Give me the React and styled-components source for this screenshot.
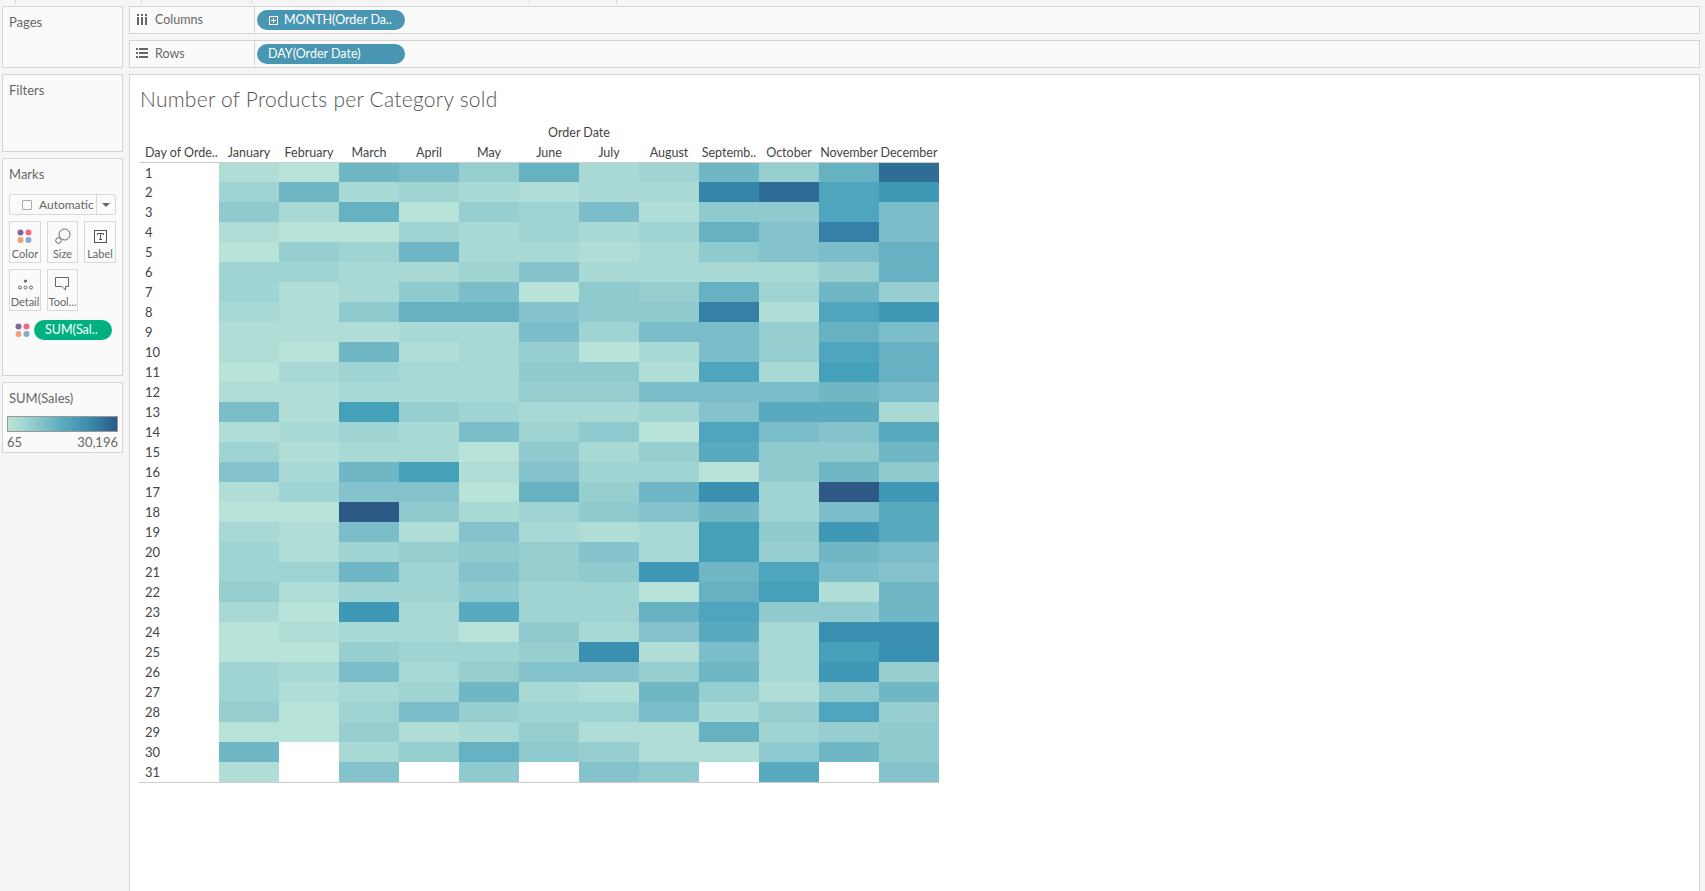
import React from 'react'
import styled, { createGlobalStyle } from 'styled-components'

const GlobalStyle = createGlobalStyle`
    html, body {
        margin: 0;
        padding: 0;
        background: #f5f5f5;
    }
    body {
        font-family: "Lato", "Open Sans", sans-serif;
        color: #555;
    }
`

const Page = styled.div`
    width: 1705px;
    height: 891px;
    overflow: hidden;
    display: flex;
    flex-direction: column;
    box-sizing: border-box;
`

const TopStrip = styled.div`
    height: 6px;
    flex: none;
    display: flex;
`

const TopTab = styled.div`
    width: ${({ $w }) => $w}px;
    box-sizing: border-box;
    border-right: 1px solid #d8d8d8;
    height: 4px;
`

const Workspace = styled.div`
    flex: 1;
    min-height: 0;
    display: grid;
    grid-template-columns: 121px 1571px;
    column-gap: 6px;
    padding-left: 2px;
`

const SideColumn = styled.div`
    display: flex;
    flex-direction: column;
    gap: 6px;
`

const Card = styled.div`
    box-sizing: border-box;
    height: ${({ $h }) => $h}px;
    background: #fafafa;
    border: 1px solid #d4d4d4;
    padding: 8px 6px 0 6px;
    font-size: 13px;
    line-height: 14px;
    color: #666;
`

const MarkType = styled.div`
    margin-top: 13px;
    height: 21px;
    width: 107px;
    box-sizing: border-box;
    border: 1px solid #d8d8d8;
    border-radius: 2px;
    background: #fafafa;
    display: grid;
    grid-template-columns: 1fr 18px;
    font-size: 12px;
`

const MarkTypeLabel = styled.div`
    display: flex;
    align-items: center;
    gap: 7px;
    padding-left: 12px;
    border-right: 1px solid #d8d8d8;
    color: #666;
`

const CheckBox = styled.span`
    width: 8px;
    height: 8px;
    border: 1px solid #aaa;
    border-radius: 1px;
`

const Caret = styled.div`
    display: flex;
    align-items: center;
    justify-content: center;
    &::after {
        content: '';
        border-left: 4px solid transparent;
        border-right: 4px solid transparent;
        border-top: 4px solid #666;
    }
`

const MarkGrid = styled.div`
    margin-top: 6px;
    display: grid;
    grid-template-columns: 32px 31px 32px;
    grid-auto-rows: 42px;
    column-gap: 6px;
    row-gap: 6px;
`

const MarkButton = styled.div`
    box-sizing: border-box;
    background: #fafafa;
    border: 1px solid #d8d8d8;
    display: flex;
    flex-direction: column;
    align-items: center;
    padding-top: 3px;
    font-size: 11px;
    line-height: 13px;
    color: #666;
    white-space: nowrap;
    overflow: hidden;
`

const IconSlot = styled.div`
    height: 22px;
    flex: none;
    display: flex;
    align-items: center;
    justify-content: center;
`

const EncodingRow = styled.div`
    margin-top: 9px;
    display: flex;
    align-items: center;
    gap: 3px;
    padding-left: 6px;
`

const Pill = styled.div`
    box-sizing: border-box;
    height: 20px;
    width: ${({ $w }) => $w}px;
    flex: none;
    border-radius: 10px;
    background: ${({ $bg }) => $bg};
    color: #fff;
    font-size: 12.5px;
    line-height: 20px;
    display: flex;
    align-items: center;
    gap: 6px;
    padding-left: ${({ $pad }) => $pad}px;
    white-space: nowrap;
`

const PlusBox = styled.span`
    width: 7px;
    height: 7px;
    border: 1px solid #fff;
    position: relative;
    &::before, &::after {
        content: '';
        position: absolute;
        background: #fff;
    }
    &::before { left: 1px; right: 1px; top: 3px; height: 1px; }
    &::after { top: 1px; bottom: 1px; left: 3px; width: 1px; }
`

const LegendTitle = styled.div`
    margin-bottom: 11px;
`

const LegendBar = styled.div`
    margin: 0 -2px;
    height: 16px;
    box-sizing: border-box;
    border: 1px solid #999;
    background: linear-gradient(to right, #bce4d8, #8fcace 25%, #5aaabf 50%, #3f90b0 72%, #2c5985);
`

const LegendScale = styled.div`
    display: flex;
    justify-content: space-between;
    margin: 3px -2px 0;
`

const MainColumn = styled.div`
    display: flex;
    flex-direction: column;
    gap: 6px;
    min-height: 0;
`

const Shelf = styled.div`
    box-sizing: border-box;
    height: ${({ $h }) => $h}px;
    flex: none;
    background: #fafafa;
    border: 1px solid #d4d4d4;
    display: grid;
    grid-template-columns: 125px 1fr;
`

const ShelfLabel = styled.div`
    border-right: 1px solid #d4d4d4;
    display: flex;
    align-items: center;
    gap: 7px;
    padding: 0 0 2px 6px;
    font-size: 12.5px;
    color: #666;
`

const ShelfIcon = styled.span`
    width: 12px;
    display: flex;
    justify-content: center;
`

const ShelfBody = styled.div`
    display: flex;
    align-items: center;
    padding-left: 2px;
`

const View = styled.div`
    flex: 1;
    min-height: 0;
    background: #fff;
    border: 1px solid #d4d4d4;
    border-bottom: none;
    padding: 12px 0 0 9px;
`

const Title = styled.h1`
    margin: 0 0 0 1px;
    font-size: 21px;
    line-height: 24px;
    font-weight: 300;
    color: #555;
    letter-spacing: 0.25px;
`

const Table = styled.div`
    margin-top: 12px;
    width: 800px;
    display: grid;
    grid-template-columns: 80px repeat(12, 60px);
    grid-template-rows: 20px 20px 19px;
    grid-auto-rows: 20px;
    font-size: 12.5px;
    color: #444;
    border-bottom: 1px solid #ccc;
`

const SuperHeader = styled.div`
    grid-column: 2 / -1;
    line-height: 20px;
    text-align: center;
    white-space: nowrap;
`

const RowHeader = styled.div`
    box-sizing: border-box;
    padding-left: 6px;
    line-height: 19px;
    white-space: nowrap;
    border-bottom: ${({ $ruled }) => ($ruled ? '1px solid #ccc' : 'none')};
`

const ColumnHeader = styled.div`
    box-sizing: border-box;
    line-height: 19px;
    white-space: nowrap;
    display: flex;
    justify-content: center;
    border-bottom: 1px solid #ccc;
`

const DayLabel = styled.div`
    padding-left: 6px;
    line-height: 20px;
    font-size: 13px;
    color: #444;
`

const Cell = styled.div`
    background: ${({ $bg }) => $bg};
`

const shades = [
    '#b8e3d8', '#b0ddd6', '#a8d9d4', '#9fd4d2', '#97cfd0', '#8fcace', '#85c3cc',
    '#7bbdc9', '#70b7c5', '#66b1c2', '#5aaabf', '#4ea5bd', '#45a0ba', '#3f98b6',
    '#3a90b1', '#3585a9', '#3480a6', '#3075a0', '#2f6d96', '#2c628e', '#2c5985',
]

const months = [
    'January', 'February', 'March', 'April', 'May', 'June', 'July', 'August',
    'Septemb..', 'October', 'November', 'December',
]

// one row per day, January to December, values index into shades
const _ = null
const sales = [
    [1, 0, 8, 7, 4, 9, 2, 3, 8, 4, 9, 18],
    [3, 8, 2, 3, 2, 1, 2, 2, 15, 18, 11, 13],
    [5, 2, 9, 0, 4, 3, 7, 1, 5, 5, 11, 7],
    [1, 0, 0, 3, 2, 3, 2, 3, 9, 6, 16, 7],
    [0, 4, 3, 8, 2, 2, 1, 2, 5, 6, 7, 9],
    [3, 3, 2, 2, 3, 6, 2, 2, 2, 2, 4, 9],
    [3, 1, 2, 5, 7, 0, 5, 4, 9, 3, 8, 4],
    [2, 1, 5, 9, 9, 6, 5, 5, 16, 1, 11, 13],
    [1, 1, 1, 2, 2, 7, 3, 7, 7, 4, 9, 7],
    [1, 0, 8, 1, 2, 4, 0, 2, 7, 4, 11, 9],
    [0, 2, 3, 2, 2, 5, 5, 1, 11, 2, 12, 9],
    [1, 1, 2, 2, 2, 4, 4, 7, 7, 7, 8, 7],
    [7, 1, 12, 4, 3, 2, 2, 3, 6, 10, 10, 2],
    [1, 2, 3, 2, 7, 3, 5, 0, 11, 7, 6, 10],
    [3, 1, 2, 2, 0, 5, 2, 4, 10, 5, 5, 8],
    [6, 2, 8, 12, 1, 6, 3, 3, 0, 5, 8, 5],
    [1, 3, 6, 6, 0, 9, 4, 8, 14, 3, 20, 13],
    [0, 0, 20, 5, 2, 3, 5, 6, 8, 3, 7, 10],
    [2, 1, 7, 1, 6, 2, 1, 2, 12, 5, 13, 10],
    [3, 1, 3, 4, 5, 4, 6, 2, 12, 4, 8, 7],
    [3, 3, 8, 3, 6, 4, 5, 13, 8, 11, 7, 6],
    [4, 1, 3, 3, 5, 3, 3, 0, 9, 12, 1, 8],
    [2, 0, 13, 2, 10, 3, 3, 9, 11, 5, 5, 8],
    [0, 1, 2, 2, 0, 5, 2, 6, 10, 2, 14, 14],
    [0, 0, 4, 3, 3, 4, 14, 1, 7, 2, 12, 14],
    [3, 2, 7, 2, 4, 6, 6, 4, 8, 2, 13, 4],
    [3, 1, 2, 3, 8, 2, 1, 8, 4, 1, 5, 8],
    [4, 0, 3, 7, 4, 3, 3, 7, 2, 4, 11, 4],
    [0, 0, 4, 1, 2, 4, 1, 1, 9, 3, 4, 5],
    [8, _, 2, 4, 9, 5, 4, 1, 1, 5, 8, 5],
    [1, _, 6, _, 5, _, 6, 5, _, 10, _, 6],
]

const ColorDots = () => (
    <svg width="16" height="15" viewBox="0 0 16 15">
        <circle cx="3.5" cy="3.5" r="3" fill="#7b6b94" />
        <circle cx="11.5" cy="3.5" r="3" fill="#ee6a7c" />
        <circle cx="3.5" cy="11" r="3" fill="#efa27a" />
        <circle cx="11.5" cy="11" r="3" fill="#85a8cf" />
    </svg>
)

const SizeIcon = () => (
    <svg width="16" height="16" viewBox="0 0 16 16" fill="none" stroke="#666">
        <circle cx="9.5" cy="6.5" r="5.5" />
        <circle cx="3.5" cy="12.5" r="2.8" fill="#fafafa" />
    </svg>
)

const LabelIcon = () => (
    <svg width="13" height="13" viewBox="0 0 13 13" fill="none" stroke="#555">
        <rect x="0.5" y="0.5" width="12" height="12" />
        <path d="M3.5 5V3.5h6V5M6.5 3.5v6M5 9.5h3" />
    </svg>
)

const DetailIcon = () => (
    <svg width="15" height="11" viewBox="0 0 15 11" fill="none" stroke="#666">
        <circle cx="7.5" cy="2" r="1.6" fill="#666" stroke="none" />
        <circle cx="2" cy="8.5" r="1.5" />
        <circle cx="7.5" cy="8.5" r="1.5" />
        <circle cx="13" cy="8.5" r="1.5" />
    </svg>
)

const TooltipIcon = () => (
    <svg width="15" height="14" viewBox="0 0 15 14" fill="none" stroke="#666">
        <path d="M0.5 0.5h13v9h-3v3.5l-3.5 -3.5h-6.5z" strokeLinejoin="round" />
    </svg>
)

const ColumnsIcon = () => (
    <svg width="10" height="11" viewBox="0 0 10 11" fill="#666">
        <rect x="0" y="0" width="2" height="2" />
        <rect x="4" y="0" width="2" height="2" />
        <rect x="8" y="0" width="2" height="2" />
        <rect x="0" y="3" width="2" height="8" />
        <rect x="4" y="3" width="2" height="8" />
        <rect x="8" y="3" width="2" height="8" />
    </svg>
)

const RowsIcon = () => (
    <svg width="12" height="10" viewBox="0 0 12 10" fill="#666">
        <rect x="0" y="0" width="2" height="2" />
        <rect x="3" y="0" width="9" height="2" />
        <rect x="0" y="4" width="2" height="2" />
        <rect x="3" y="4" width="9" height="2" />
        <rect x="0" y="8" width="2" height="2" />
        <rect x="3" y="8" width="9" height="2" />
    </svg>
)

const marks = [
    { label: 'Color', icon: <ColorDots /> },
    { label: 'Size', icon: <SizeIcon /> },
    { label: 'Label', icon: <LabelIcon /> },
    { label: 'Detail', icon: <DetailIcon /> },
    { label: 'Tool...', icon: <TooltipIcon /> },
]

const tabWidths = [16, 126, 110, 278, 87]

const App = () => {
    return (
        <Page>
            <GlobalStyle />
            <TopStrip>
                {tabWidths.map((w, i) => <TopTab key={i} $w={w} />)}
            </TopStrip>
            <Workspace>
                <SideColumn>
                    <Card $h={62}>Pages</Card>
                    <Card $h={78}>Filters</Card>
                    <Card $h={218}>
                        Marks
                        <MarkType>
                            <MarkTypeLabel>
                                <CheckBox />
                                Automatic
                            </MarkTypeLabel>
                            <Caret />
                        </MarkType>
                        <MarkGrid>
                            {marks.map((m) => (
                                <MarkButton key={m.label}>
                                    <IconSlot>{m.icon}</IconSlot>
                                    {m.label}
                                </MarkButton>
                            ))}
                        </MarkGrid>
                        <EncodingRow>
                            <ColorDots />
                            <Pill $w={78} $bg="#00b180" $pad={11}>SUM(Sal..</Pill>
                        </EncodingRow>
                    </Card>
                    <Card $h={71}>
                        <LegendTitle>SUM(Sales)</LegendTitle>
                        <LegendBar />
                        <LegendScale>
                            <span>65</span>
                            <span>30,196</span>
                        </LegendScale>
                    </Card>
                </SideColumn>
                <MainColumn>
                    <Shelf $h={28}>
                        <ShelfLabel><ShelfIcon><ColumnsIcon /></ShelfIcon>Columns</ShelfLabel>
                        <ShelfBody>
                            <Pill $w={148} $bg="#4996b2" $pad={12}>
                                <PlusBox />
                                MONTH(Order Da..
                            </Pill>
                        </ShelfBody>
                    </Shelf>
                    <Shelf $h={28}>
                        <ShelfLabel><ShelfIcon><RowsIcon /></ShelfIcon>Rows</ShelfLabel>
                        <ShelfBody>
                            <Pill $w={148} $bg="#4996b2" $pad={11}>DAY(Order Date)</Pill>
                        </ShelfBody>
                    </Shelf>
                    <View>
                        <Title>Number of Products per Category sold</Title>
                        <Table>
                            <RowHeader />
                            <SuperHeader>Order Date</SuperHeader>
                            <RowHeader $ruled>Day of Orde..</RowHeader>
                            {months.map((m) => (
                                <ColumnHeader key={m}>{m}</ColumnHeader>
                            ))}
                            {sales.map((row, i) => (
                                <React.Fragment key={i}>
                                    <DayLabel>{i + 1}</DayLabel>
                                    {row.map((v, j) => (
                                        <Cell key={j} $bg={v === null ? '#fff' : shades[v]} />
                                    ))}
                                </React.Fragment>
                            ))}
                        </Table>
                    </View>
                </MainColumn>
            </Workspace>
        </Page>
    )
}

export default App
